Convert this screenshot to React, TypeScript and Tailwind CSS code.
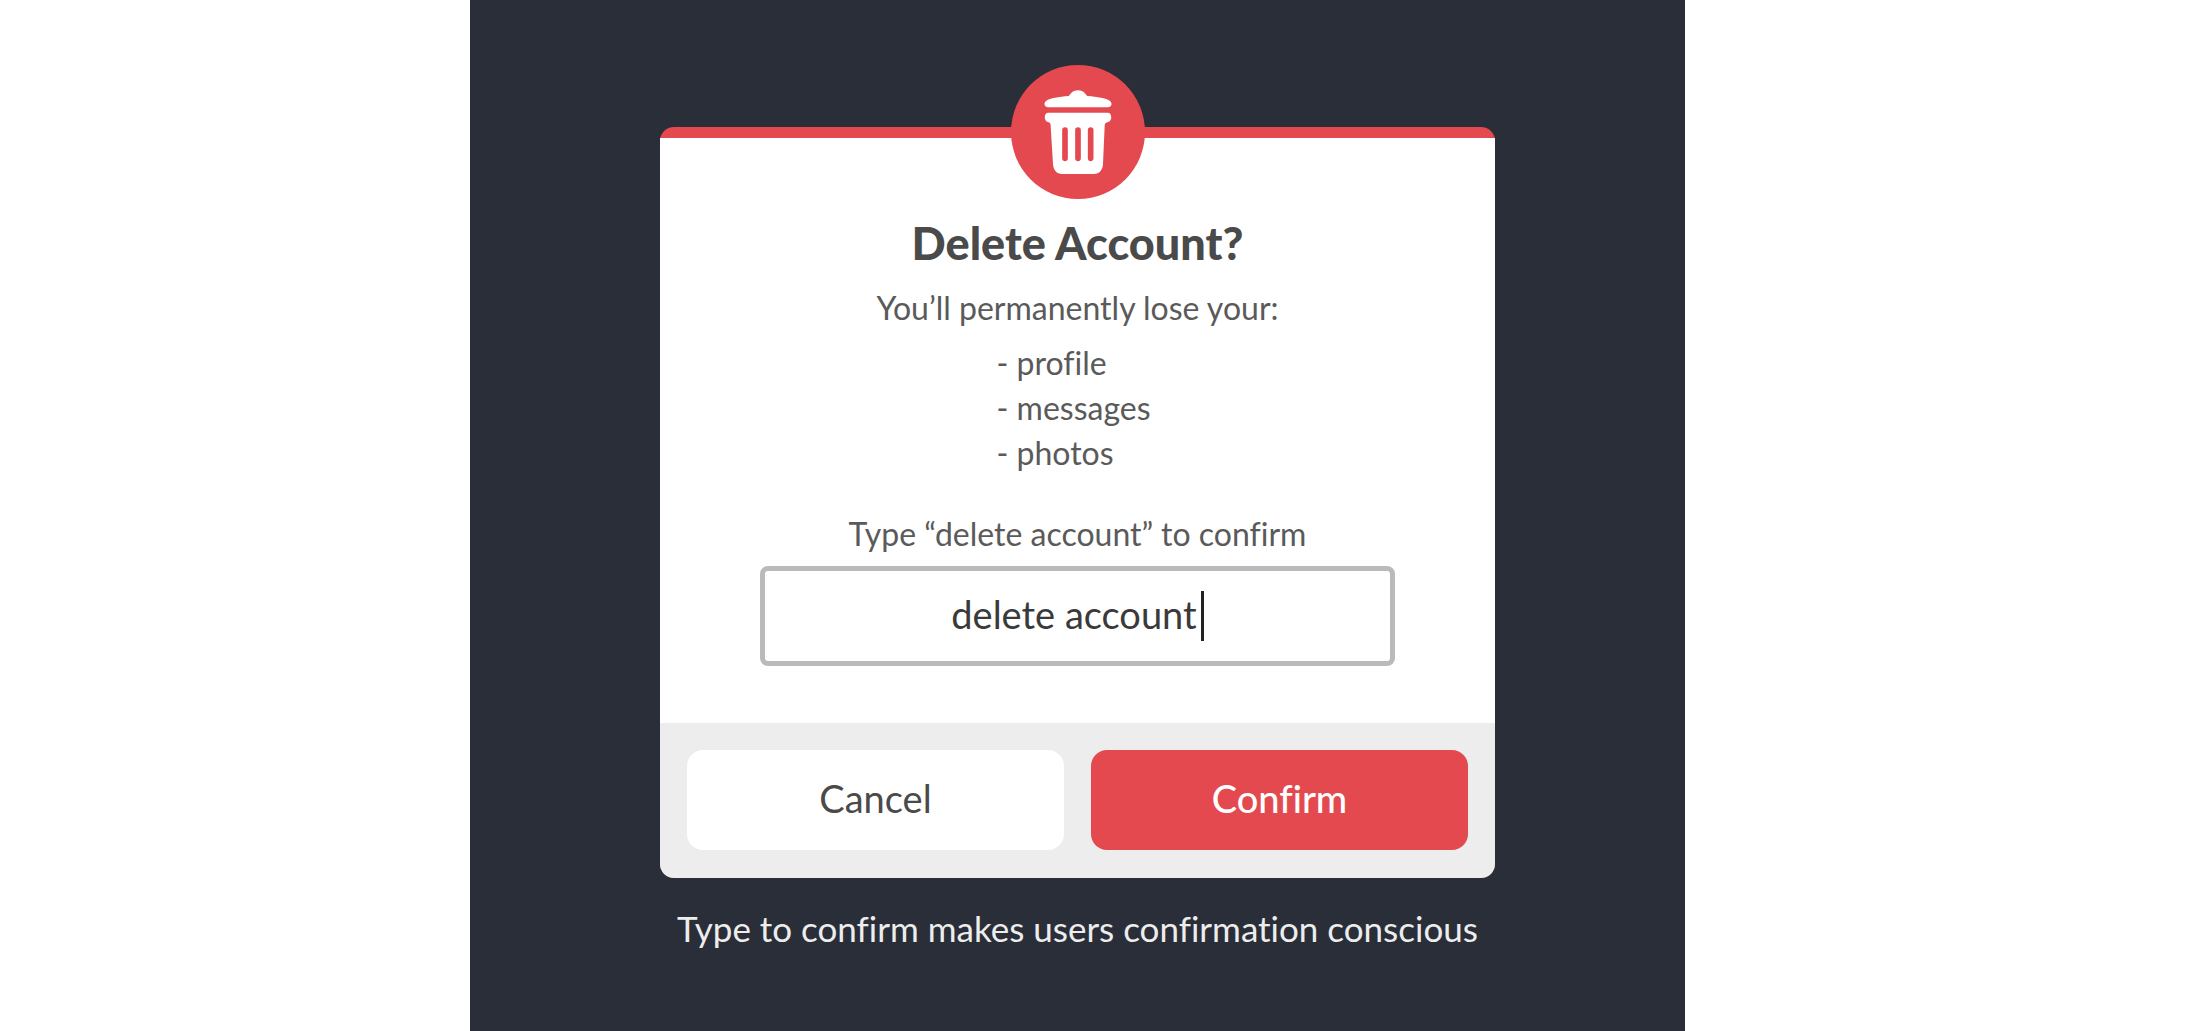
import { useState } from "react"

const losses = ["profile", "messages", "photos"]

function TrashIcon() {
  return (
    <svg viewBox="0 0 204 252" className="h-[84px] w-[68px]" aria-hidden="true">
      <path
        fill="#fff"
        d="M74 18C80 13 84 1 102 1S124 13 130 18C160 20 186 25 197 32C206 38 204 52 191 52H13C0 52 -2 38 7 32C18 25 44 20 74 18Z"
      />
      <path
        fill="#fff"
        d="M13 68H191C205 68 206 94 190 97C184 98 182 102 182 108L177 222C176 240 166 252 150 252H54C38 252 28 240 27 222L20 108C20 102 19 98 14 97C-2 94 -1 68 13 68Z"
      />
      <path d="M63 120V205M102 120V205M140 120V205" stroke="#e4494f" strokeWidth="17" strokeLinecap="round" />
    </svg>
  )
}

function DeleteDialog() {
  const [value, setValue] = useState("delete account")

  return (
    <section
      role="dialog"
      aria-labelledby="dialog-title"
      className="flex w-full max-w-[835px] flex-col rounded-[14px] bg-[#e4494f] pt-[11px] text-[#4a4a4a]"
    >
      <div className="flex flex-col items-center bg-white px-[100px] pb-[57px]">
        <div className="-mt-[73px] flex size-[134px] items-center justify-center rounded-full bg-[#e4494f]">
          <TrashIcon />
        </div>
        <h1 id="dialog-title" className="mt-5 text-[45px] leading-[48px] font-black">
          Delete Account?
        </h1>
        <p className="mt-[18px] text-[32px] leading-[45px] text-[#5a5a5a]">You’ll permanently lose your:</p>
        <ul className="mt-[10px] pr-2 text-[32px] leading-[45px] text-[#5a5a5a]">
          {losses.map((item) => (
            <li key={item}>- {item}</li>
          ))}
        </ul>
        <label htmlFor="confirm-text" className="mt-9 text-[32px] leading-[45px] text-[#5a5a5a]">
          Type “delete account” to confirm
        </label>
        <div className="mt-[10px] flex h-[100px] w-full items-center justify-center gap-1 rounded-lg border-5 border-[#bababa]">
          <input
            id="confirm-text"
            type="text"
            value={value}
            onChange={(e) => setValue(e.target.value)}
            className="field-sizing-content pb-1 text-[38px] leading-[48px] text-[#3a3a3a] caret-transparent outline-none"
          />
          <span className="h-[50px] w-[3px] bg-[#222]" />
        </div>
      </div>
      <div className="flex gap-[27px] rounded-b-[14px] bg-[#ededed] px-[27px] pt-[27px] pb-[28px]">
        <button type="button" className="h-[100px] flex-1 rounded-2xl bg-white pb-1 text-[38px]">
          Cancel
        </button>
        <button type="button" className="h-[100px] flex-1 rounded-2xl bg-[#e4494f] pb-1 text-[38px] font-medium text-white">
          Confirm
        </button>
      </div>
    </section>
  )
}

export default function App() {
  return (
    <div className="grid min-h-screen grid-cols-[470fr_1215fr_515fr] bg-white font-['Lato','Open_Sans',sans-serif] [font-variant-ligatures:none]">
      <main className="col-start-2 flex flex-col items-center bg-[#2a2e38] pt-[127px]">
        <DeleteDialog />
        <p className="mt-6 text-[35px] leading-[52px] text-[#ededed]">
          Type to confirm makes users confirmation conscious
        </p>
      </main>
    </div>
  )
}
